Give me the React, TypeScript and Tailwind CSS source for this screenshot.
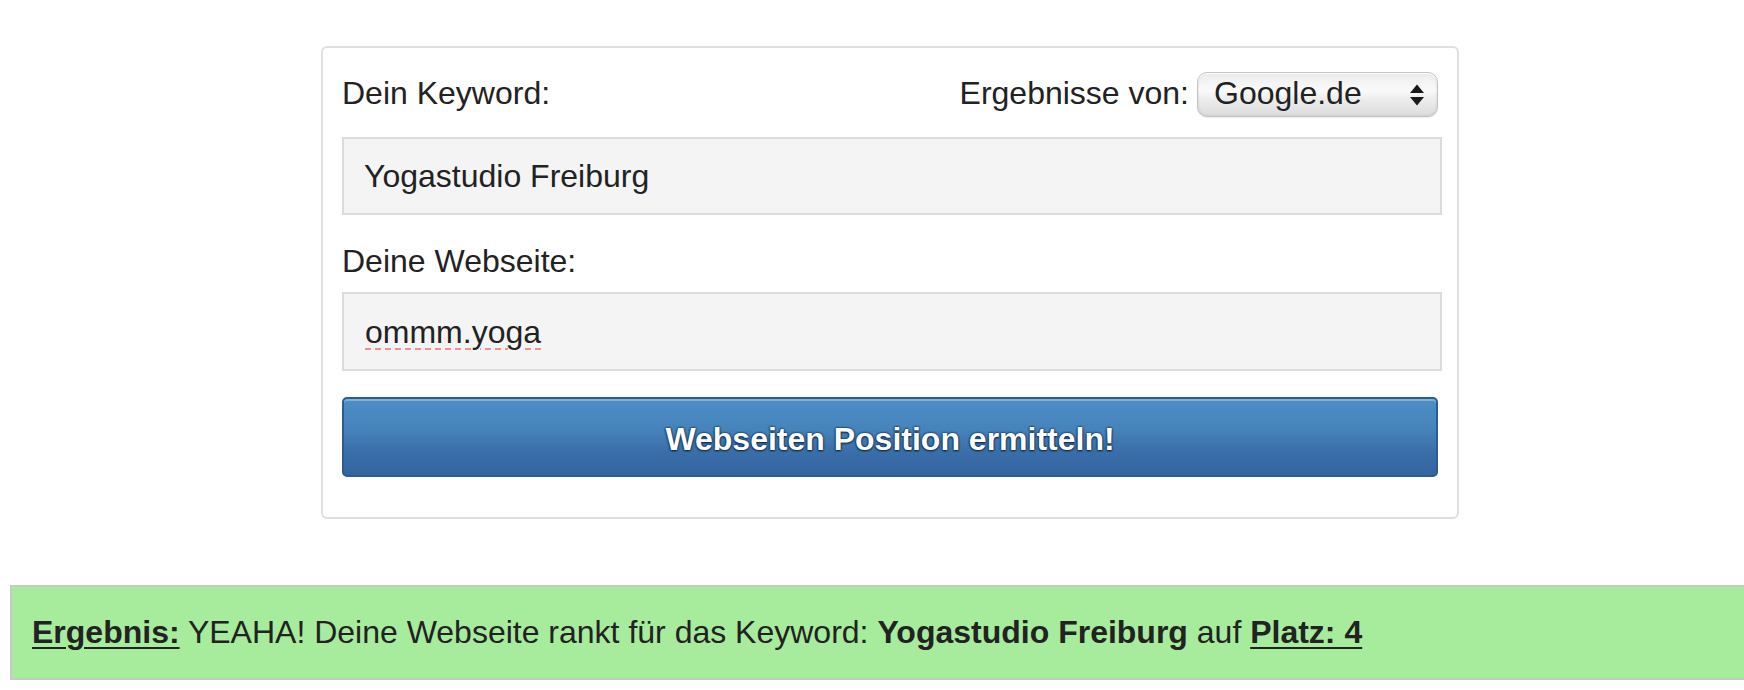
import { useState } from "react";

const Arrows = () => (
  <svg width="16" height="22" viewBox="0 0 16 22" className="shrink-0">
    <path d="M8 0.5 L15 9 L1 9 Z" fill="#1a1a1a" />
    <path d="M8 21.5 L15 13 L1 13 Z" fill="#1a1a1a" />
  </svg>
);

const App = () => {
  const [engine] = useState("Google.de");

  return (
    <div className="w-full min-h-screen bg-white text-[#222] [font-family:'Liberation_Sans',Arial,sans-serif] overflow-hidden">
      {/* Form card */}
      <div className="ml-[321px] mt-[46px] w-[1138px] border-2 border-[#e0e0e0] rounded-[6px] pl-[19px] pr-[19px] pt-[24px] pb-[40px]">
        {/* Header row */}
        <div className="flex items-center justify-between h-[45px] text-[32px]">
          <span className="pb-[3px] leading-[40px]">Dein Keyword:</span>
          <div className="flex items-center">
            <span className="pb-[3px] leading-[40px]">Ergebnisse von:</span>
            <div className="ml-[8px] w-[241px] h-[45px] flex items-center justify-between pl-[16px] pr-[12px] rounded-[10px] border border-[#c4c4c4] bg-[linear-gradient(to_bottom,#ececec,#fafafa_40%,#ededed_60%,#dcdcdc)] shadow-[inset_0_1px_0_#ffffff,inset_0_0_3px_rgba(0,0,0,0.12),0_1px_1px_rgba(0,0,0,0.08)]">
              <span className="pb-[4px] leading-[40px]">{engine}</span>
              <Arrows />
            </div>
          </div>
        </div>

        {/* Keyword input */}
        <div className="mt-[20px] w-[1100px] h-[78px] flex items-center pl-[20px] border-2 border-[#dcdcdc] bg-[#f4f4f4] text-[32px]">
          <span className="leading-[40px]">Yogastudio Freiburg</span>
        </div>

        {/* Website label + input */}
        <div className="mt-[23px] text-[32px] leading-[46px]">Deine Webseite:</div>
        <div className="mt-[8px] w-[1100px] h-[79px] flex items-center pl-[21px] border-2 border-[#dcdcdc] bg-[#f4f4f4] text-[32px]">
          <span className="leading-[40px] underline decoration-dashed decoration-[#f0928a] decoration-2 underline-offset-[6px]">
            ommm.yoga
          </span>
        </div>

        {/* Submit */}
        <button className="mt-[26px] w-[1096px] h-[80px] flex items-center justify-center pt-[3px] rounded-[5px] border-2 border-[#2d5c93] bg-[linear-gradient(to_bottom,#4c8ec7,#4683bb_40%,#3a6ea8_70%,#3465a0)] shadow-[inset_0_2px_0_rgba(255,255,255,0.3)] text-white text-[32px] font-bold [text-shadow:0_0_2px_#0f2a4d,0_0_2px_#0f2a4d,0_1px_2px_#0f2a4d]">
          Webseiten Position ermitteln!
        </button>
      </div>

      {/* Result bar */}
      <div className="ml-[10px] mt-[66px] h-[95px] flex items-center pl-[20px] border-2 border-r-0 border-[#c8c8c8] bg-[#a6ec9c] text-[32px]">
        <p className="pb-[2px] leading-[40px] whitespace-nowrap">
          <span className="font-bold underline underline-offset-[4px] decoration-2">Ergebnis:</span> YEAHA! Deine Webseite rankt
          für das Keyword: <span className="font-bold">Yogastudio Freiburg</span> auf{" "}
          <span className="font-bold underline underline-offset-[4px] decoration-2">Platz: 4</span>
        </p>
      </div>
    </div>
  );
};

export default App;
